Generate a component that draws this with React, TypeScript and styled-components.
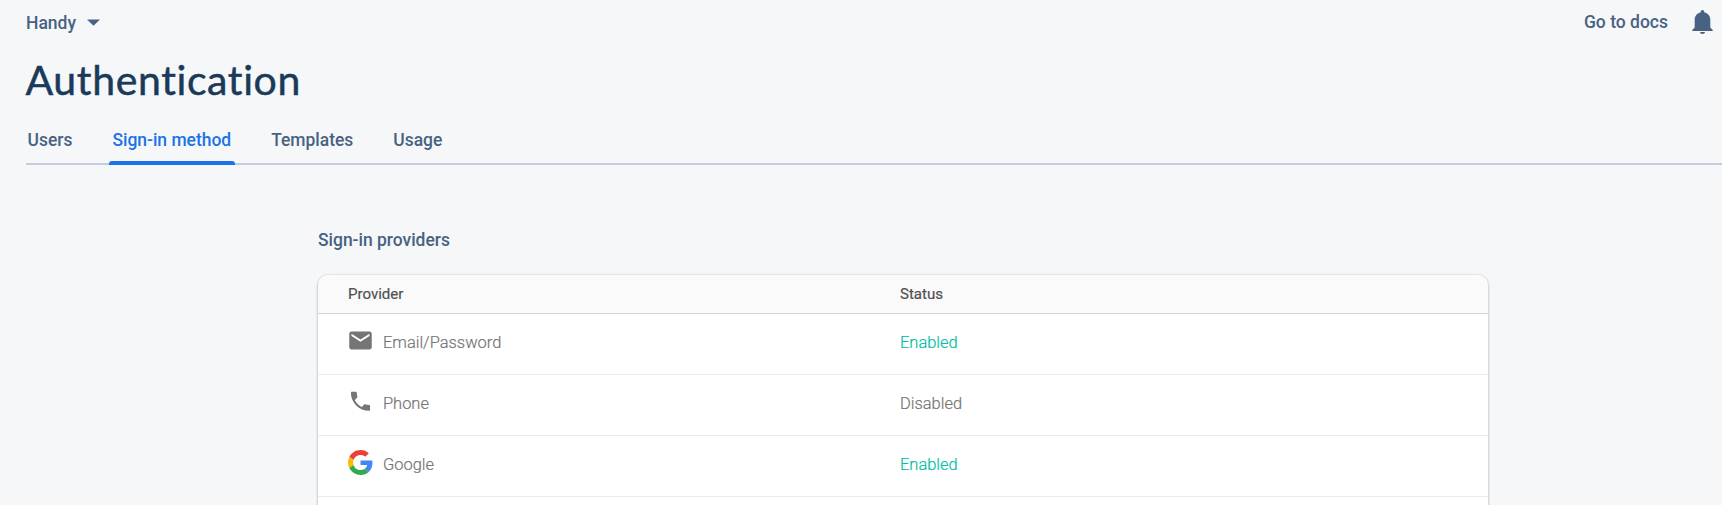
import React from 'react';
import styled, { createGlobalStyle } from 'styled-components';

const GlobalStyle = createGlobalStyle`
  html, body { margin: 0; background: #f6f7f9; overflow: hidden; }
  body { font-family: Roboto, "Noto Sans", sans-serif; }
  * { box-sizing: border-box; }
`;

const Page = styled.div`
  height: 505px;
  overflow: hidden;
  background: #f6f7f9;
  color: #476282;
`;

const TopBar = styled.header`
  display: flex;
  justify-content: space-between;
  align-items: center;
  height: 44px;
  padding: 0 9px 0 26px;
  font-size: 17.5px;
  font-weight: 500;
`;

const ProjectPicker = styled.div`
  display: flex;
  align-items: center;
  gap: 11px;
  padding-top: 1px;
`;

const TopActions = styled.div`
  display: flex;
  align-items: center;
  gap: 24px;
`;

const Title = styled.h1`
  margin: 13px 0 0 25.5px;
  height: 47px;
  font: 400 41px/46px Lato, Roboto, sans-serif;
  letter-spacing: 0.62px;
  -webkit-text-stroke: 0.5px currentColor;
  color: #1a3a5a;
`;

const Tabs = styled.nav`
  display: flex;
  gap: 32px;
  height: 45px;
  margin: 16px 0 0 26px;
  border-bottom: 2px solid #c3cddd;
`;

const Tab = styled.div<{ $active?: boolean }>`
  display: flex;
  flex-direction: column;
  justify-content: space-between;
  height: 45px;
  padding: 8px 4px 0 4px;
  font-size: 17.45px;
  line-height: 24px;
  font-weight: 500;
  white-space: nowrap;
  color: ${p => (p.$active ? '#1a73e8' : '#476282')};
  &:first-child { padding-left: 1.5px; }
  &::after {
    content: '';
    height: 4px;
    margin: 0 -3.5px;
    border-radius: 3px 3px 0 0;
    background: ${p => (p.$active ? '#1a73e8' : 'transparent')};
  }
`;

const Content = styled.main`
  width: 1170px;
  margin: 62px 0 0 318px;
`;

const SectionTitle = styled.h2`
  margin: 0 0 22px;
  font-size: 17.45px;
  line-height: 26px;
  font-weight: 500;
`;

const Card = styled.section`
  height: 300px;
  background: #fff;
  border-radius: 10px 10px 0 0;
  overflow: hidden;
  box-shadow: 0 1px 3px rgba(0, 0, 0, 0.26), 0 0 2px rgba(0, 0, 0, 0.16);
`;

const Row = styled.div`
  display: grid;
  grid-template-columns: 552px 1fr;
  align-items: center;
  height: 61px;
  padding: 0 30px 4px;
  border-bottom: 1px solid #ebebeb;
  font-size: 16.45px;
  font-weight: 300;
  -webkit-text-stroke: 0.2px currentColor;
  color: #757575;
`;

const HeaderRow = styled(Row)`
  height: 39px;
  padding-bottom: 0;
  background: #fafafa;
  border-bottom-color: #d6d6d6;
  font-size: 15.05px;
  font-weight: 400;
  color: #505050;
`;

const Provider = styled.div`
  display: flex;
  align-items: center;
  gap: 11px;
`;

const IconBox = styled.span`
  display: flex;
  align-items: center;
  justify-content: center;
  width: 24px;
  height: 34px;
  padding-bottom: 3px;
  color: #757575;
  svg { flex: none; }
`;

const Status = styled.div<{ $enabled: boolean }>`
  color: ${p => (p.$enabled ? '#00bfa5' : '#757575')};
`;

const MailIcon = () => (
  <svg width="27" height="27" viewBox="0 0 24 24" fill="currentColor">
    <path d="M20 4H4c-1.1 0-1.99.9-1.99 2L2 18c0 1.1.9 2 2 2h16c1.1 0 2-.9 2-2V6c0-1.1-.9-2-2-2zm0 4l-8 5-8-5V6l8 5 8-5v2z" />
  </svg>
);

const PhoneIcon = () => (
  <svg width="25.5" height="25.5" viewBox="-0.7 0.5 24 24" fill="currentColor">
    <path d="M6.62 10.79c1.44 2.83 3.76 5.14 6.59 6.59l2.2-2.2c.27-.27.67-.36 1.02-.24 1.12.37 2.33.57 3.57.57.55 0 1 .45 1 1V20c0 .55-.45 1-1 1-9.39 0-17-7.61-17-17 0-.55.45-1 1-1h3.5c.55 0 1 .45 1 1 0 1.25.2 2.45.57 3.57.11.35.03.74-.25 1.02l-2.2 2.2z" />
  </svg>
);

const GoogleIcon = () => (
  <svg width="25" height="25" viewBox="0 0 48 48">
    <path fill="#EA4335" d="M24 9.5c3.54 0 6.71 1.22 9.21 3.6l6.85-6.85C35.9 2.38 30.47 0 24 0 14.62 0 6.51 5.38 2.56 13.22l7.98 6.19C12.43 13.72 17.74 9.5 24 9.5z" />
    <path fill="#4285F4" d="M46.98 24.55c0-1.57-.15-3.09-.38-4.55H24v9.02h12.94c-.58 2.96-2.26 5.48-4.78 7.18l7.73 6c4.51-4.18 7.09-10.36 7.09-17.65z" />
    <path fill="#FBBC05" d="M10.53 28.59c-.48-1.45-.76-2.99-.76-4.59s.27-3.14.76-4.59l-7.98-6.19C.92 16.46 0 20.12 0 24c0 3.88.92 7.54 2.56 10.78l7.97-6.19z" />
    <path fill="#34A853" d="M24 48c6.48 0 11.93-2.13 15.89-5.81l-7.73-6c-2.15 1.45-4.92 2.3-8.16 2.3-6.26 0-11.57-4.22-13.47-9.91l-7.98 6.19C6.51 42.62 14.62 48 24 48z" />
  </svg>
);

const BellIcon = () => (
  <svg width="21" height="24" viewBox="0 0 21 24" fill="currentColor">
    <path d="M10.5 0C9.5 0 8.8.8 8.8 1.7V2.3C5.2 3.1 2.7 6 2.7 9.7v7.8L.3 20v1h20.4v-1L18.3 17.5V9.7c0-3.7-2.5-6.6-6.1-7.4V1.7C12.2.8 11.5 0 10.5 0zM8 22a2.5 2 0 0 0 5 0z" />
  </svg>
);

const CaretIcon = () => (
  <svg width="13" height="7" viewBox="0 0 13 7" fill="currentColor">
    <path d="M0 0.5h13L6.5 6.8z" />
  </svg>
);

const tabs = ['Users', 'Sign-in method', 'Templates', 'Usage'];

const providers = [
  { name: 'Email/Password', icon: <MailIcon />, enabled: true },
  { name: 'Phone', icon: <PhoneIcon />, enabled: false },
  { name: 'Google', icon: <GoogleIcon />, enabled: true },
];

export default function App() {
  return (
    <Page>
      <GlobalStyle />
      <TopBar>
        <ProjectPicker>Handy<CaretIcon /></ProjectPicker>
        <TopActions><span>Go to docs</span><BellIcon /></TopActions>
      </TopBar>
      <Title>Authentication</Title>
      <Tabs>
        {tabs.map(t => <Tab key={t} $active={t === 'Sign-in method'}>{t}</Tab>)}
      </Tabs>
      <Content>
        <SectionTitle>Sign-in providers</SectionTitle>
        <Card>
          <HeaderRow><div>Provider</div><div>Status</div></HeaderRow>
          {providers.map(p => (
            <Row key={p.name}>
              <Provider><IconBox>{p.icon}</IconBox>{p.name}</Provider>
              <Status $enabled={p.enabled}>{p.enabled ? 'Enabled' : 'Disabled'}</Status>
            </Row>
          ))}
        </Card>
      </Content>
    </Page>
  );
}
